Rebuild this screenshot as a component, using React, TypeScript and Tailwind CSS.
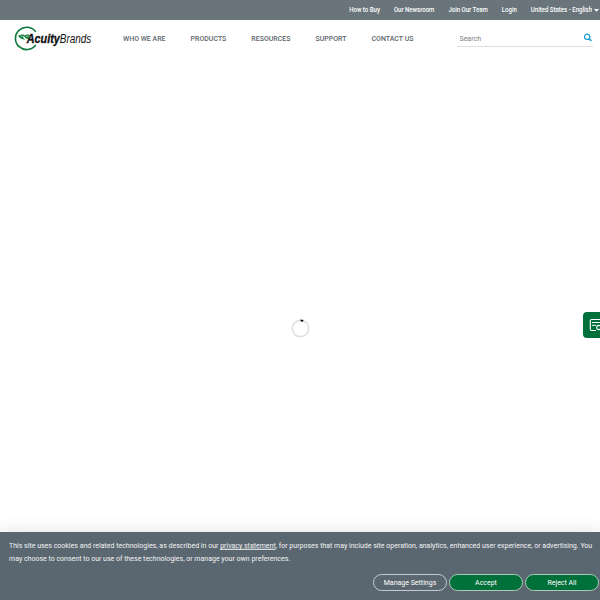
const utilityLinks = ["How to Buy", "Our Newsroom", "Join Our Team", "Login"];

const navLinks = ["WHO WE ARE", "PRODUCTS", "RESOURCES", "SUPPORT", "CONTACT US"];

function Logo() {
  return (
    <svg width="84" height="28" viewBox="0 0 84 28" role="img" aria-label="Acuity Brands">
      <path
        d="M22.500 6.800A11.200 11.200 0 1 0 22.500 20"
        transform="translate(-.8 0)"
        fill="none"
        stroke="#0b7a3c"
        strokeWidth="1.600"
      />
      {/* two leaves, each with a light vein */}
      <path d="M10.500 9.800Q6 8.600 4.200 11q1.600 3 7.300 3.800L9 12.800Z" fill="#0b7a3c" />
      <path d="M16 9.800Q11.500 8.600 9.700 11q1.600 3 7.300 3.800l-2.500-2Z" fill="#0b7a3c" />
      <path d="M6.500 11.200h3M11.800 11.200h3" stroke="#ffffff" strokeWidth="0.600" />
      <text
        x="12.800"
        y="17.500"
        textLength="33"
        lengthAdjust="spacingAndGlyphs"
        fontFamily="'Liberation Sans', Arial, sans-serif"
        fontSize="12"
        fontWeight="700"
        fontStyle="italic"
        fill="#111111"
        stroke="#111111"
        strokeWidth="0.350"
      >
        Acuity
      </text>
      <text
        x="45.800"
        y="17.500"
        textLength="31.500"
        lengthAdjust="spacingAndGlyphs"
        fontFamily="'Liberation Sans', Arial, sans-serif"
        fontSize="12"
        fontStyle="italic"
        fill="#111111"
      >
        Brands
      </text>
    </svg>
  );
}

function TopBar() {
  return (
    <div className="flex h-5 items-center justify-end gap-[14px] bg-[#69757b] pr-[1px] text-[6.05px] leading-none font-medium text-white">
      {utilityLinks.map((label) => (
        <a key={label} href="#" className="scale-y-115 whitespace-nowrap">
          {label}
        </a>
      ))}
      <button type="button" className="flex items-center gap-[2px] whitespace-nowrap">
        <span className="scale-y-115">United States - English</span>
        <svg className="mt-px shrink-0" width="5" height="3" viewBox="0 0 5 3" fill="#ffffff">
          <path d="M0 0h5L2.500 2.700z" />
        </svg>
      </button>
    </div>
  );
}

function Header() {
  return (
    <header className="flex h-[37px] items-center bg-white pl-[14px]">
      <Logo />
      <nav className="mt-px ml-[25px] flex gap-[25px] text-[7px] leading-none font-medium text-[#5b666d]">
        {navLinks.map((label) => (
          <a key={label} href="#" className="scale-y-115 whitespace-nowrap">
            {label}
          </a>
        ))}
      </nav>
      <form className="mr-[7px] ml-auto flex h-[17px] w-[136px] items-center justify-between border-b border-[#dedede] pr-px pl-[2.5px]">
        <input
          type="text"
          placeholder="Search"
          className="mt-px h-[10px] w-[90px] scale-y-115 text-[7px] leading-none outline-none placeholder:text-[#808080]"
        />
        <svg className="mb-px" width="9" height="9" viewBox="0 0 9 9" fill="none" stroke="#149bd1">
          <circle cx="4.200" cy="3.800" r="2.700" strokeWidth="1.200" />
          <path d="M6.200 5.800 8.400 8" strokeWidth="1.500" />
        </svg>
      </form>
    </header>
  );
}

function Spinner() {
  return (
    <svg width="20" height="20" viewBox="0 0 20 20" fill="none">
      <circle cx="10.500" cy="9.500" r="8.200" stroke="#e2e2e2" strokeWidth="1.700" />
      <path d="M10.500 1.400q1.500 0 2.700.5" stroke="#111111" strokeWidth="1.700" />
    </svg>
  );
}

function FeedbackTab() {
  return (
    <button
      type="button"
      aria-label="Feedback"
      className="absolute top-[312px] right-0 flex h-[26px] w-[17px] items-center overflow-hidden rounded-l-[4px] bg-[#00703a] pl-[6px]"
    >
      <svg className="shrink-0" width="14" height="14" viewBox="0 0 14 14" fill="none" stroke="#ffffff">
        <path d="M7 12.500H2.500a1.200 1.200 0 0 1-1.200-1.200V2.700a1.200 1.200 0 0 1 1.200-1.200h10" strokeWidth="1.100" />
        <path d="M3 4.500h9M3 7.300h4" strokeWidth="1" />
        <circle cx="9.800" cy="9.500" r="2.100" strokeWidth="1.100" />
      </svg>
    </button>
  );
}

function CookieBanner() {
  return (
    <div className="absolute inset-x-0 bottom-0 flex h-[68px] flex-col justify-between bg-[#5b6770] pt-[8px] pr-px pb-[9px] pl-[9px] text-white shadow-[0_0_18px_rgba(0,0,0,0.12)]">
      <p className="scale-y-110 text-[7.015px] leading-[11.900px] whitespace-nowrap text-[#f2f3f4]">
        This site uses cookies and related technologies, as described in our{" "}
        <a href="#" className="underline">
          privacy statement
        </a>
        , for purposes that may include site operation, analytics, enhanced user experience, or advertising. You
        <br />
        may choose to consent to our use of these technologies, or manage your own preferences.
      </p>
      <div className="flex justify-end gap-[2px] text-[7px] leading-none">
        <button type="button" className="h-[17px] w-[74px] rounded-full border border-[#c4cacf]">
          <span className="mt-px inline-block scale-y-115">Manage Settings</span>
        </button>
        <button type="button" className="h-[17px] w-[74px] rounded-full border border-[#a9cbb8] bg-[#00703a]">
          <span className="mt-px inline-block scale-y-115">Accept</span>
        </button>
        <button type="button" className="h-[17px] w-[74px] rounded-full border border-[#a9cbb8] bg-[#00703a]">
          <span className="mt-px inline-block scale-y-115">Reject All</span>
        </button>
      </div>
    </div>
  );
}

export default function App() {
  return (
    <div className="relative flex h-[600px] w-full flex-col overflow-hidden bg-white font-['Roboto',sans-serif]">
      <TopBar />
      <Header />
      <main className="flex flex-1 items-center justify-center">
        <Spinner />
      </main>
      <FeedbackTab />
      <CookieBanner />
    </div>
  );
}
